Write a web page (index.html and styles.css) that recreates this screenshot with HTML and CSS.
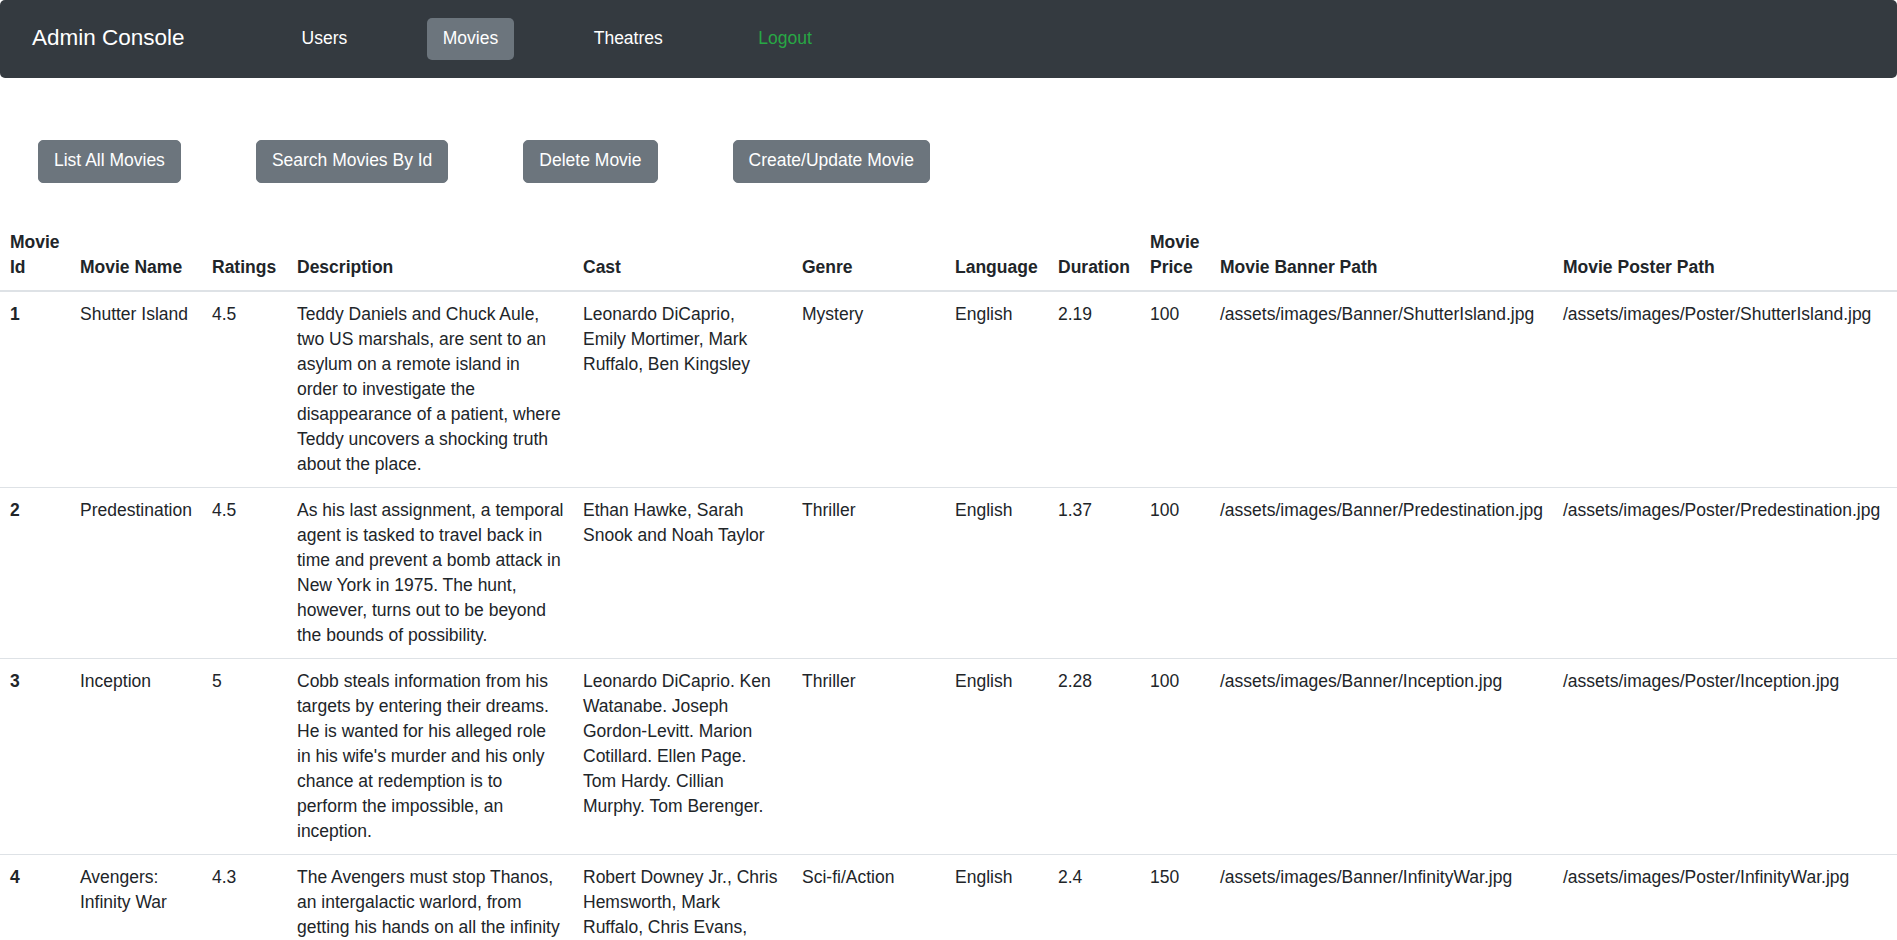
FILE: index.html
```html
<!DOCTYPE html>
<html lang="en">
<head>
<meta charset="utf-8">
<title>Admin Console</title>
<link rel="stylesheet" href="styles.css">
</head>
<body>
<nav class="navbar">
  <span class="brand">Admin Console</span>
  <ul class="nav">
    <li><a class="nav-link">Users</a></li>
    <li><a class="nav-link active">Movies</a></li>
    <li><a class="nav-link">Theatres</a></li>
    <li><a class="nav-link logout">Logout</a></li>
  </ul>
</nav>

<div class="toolbar">
  <button class="btn">List All Movies</button>
  <button class="btn">Search Movies By Id</button>
  <button class="btn">Delete Movie</button>
  <button class="btn">Create/Update Movie</button>
</div>

<table class="movies">
  <colgroup>
    <col class="c-id"><col class="c-name"><col class="c-rating"><col class="c-desc"><col class="c-cast"><col class="c-genre"><col class="c-lang"><col class="c-dur"><col class="c-price"><col class="c-banner"><col class="c-poster">
  </colgroup>
  <thead>
    <tr>
      <th>Movie Id</th><th>Movie Name</th><th>Ratings</th><th>Description</th><th>Cast</th><th>Genre</th><th>Language</th><th>Duration</th><th>Movie Price</th><th>Movie Banner Path</th><th>Movie Poster Path</th>
    </tr>
  </thead>
  <tbody>
    <tr>
      <th>1</th><td>Shutter Island</td><td>4.5</td>
      <td class="desc">Teddy Daniels and Chuck Aule, two US marshals, are sent to an asylum on a remote island in order to investigate the disappearance of a patient, where Teddy uncovers a shocking truth about the place.</td>
      <td>Leonardo DiCaprio, Emily Mortimer, Mark Ruffalo, Ben Kingsley</td>
      <td>Mystery</td><td>English</td><td>2.19</td><td>100</td>
      <td>/assets/images/Banner/ShutterIsland.jpg</td><td>/assets/images/Poster/ShutterIsland.jpg</td>
    </tr>
    <tr>
      <th>2</th><td>Predestination</td><td>4.5</td>
      <td class="desc">As his last assignment, a temporal agent is tasked to travel back in time and prevent a bomb attack in New York in 1975. The hunt, however, turns out to be beyond the bounds of possibility.</td>
      <td>Ethan Hawke, Sarah Snook and Noah Taylor</td>
      <td>Thriller</td><td>English</td><td>1.37</td><td>100</td>
      <td>/assets/images/Banner/Predestination.jpg</td><td>/assets/images/Poster/Predestination.jpg</td>
    </tr>
    <tr>
      <th>3</th><td>Inception</td><td>5</td>
      <td class="desc">Cobb steals information from his targets by entering their dreams. He is wanted for his alleged role in his wife's murder and his only chance at redemption is to perform the impossible, an inception.</td>
      <td>Leonardo DiCaprio. Ken Watanabe. Joseph Gordon-Levitt. Marion Cotillard. Ellen Page. Tom Hardy. Cillian Murphy. Tom Berenger.</td>
      <td>Thriller</td><td>English</td><td>2.28</td><td>100</td>
      <td>/assets/images/Banner/Inception.jpg</td><td>/assets/images/Poster/Inception.jpg</td>
    </tr>
    <tr>
      <th>4</th><td>Avengers: Infinity War</td><td>4.3</td>
      <td class="desc">The Avengers must stop Thanos, an intergalactic warlord, from getting his hands on all the infinity stones.</td>
      <td>Robert Downey Jr., Chris Hemsworth, Mark Ruffalo, Chris Evans, Scarlett Johansson</td>
      <td>Sci-fi/Action</td><td>English</td><td>2.4</td><td>150</td>
      <td>/assets/images/Banner/InfinityWar.jpg</td><td>/assets/images/Poster/InfinityWar.jpg</td>
    </tr>
  </tbody>
</table>
</body>
</html>
```

FILE: styles.css
```css
* { box-sizing: border-box; }

html, body {
  margin: 0;
  padding: 0;
  background: #fff;
}

body {
  font-family: "Liberation Sans", Arial, sans-serif;
  font-size: 17.5px;
  line-height: 25px;
  color: #212529;
}

.navbar {
  display: flex;
  align-items: center;
  height: 78px;
  padding-left: 32px;
  background: #343a40;
  border-radius: 5px;
}

.brand {
  color: #fff;
  font-size: 22.5px;
  line-height: 28px;
  margin-top: -2px;
}

.nav {
  display: flex;
  align-items: center;
  gap: 63.5px;
  list-style: none;
  margin: 0 0 0 101px;
  padding: 0;
}

.nav-link {
  display: block;
  padding: 7.5px 16px 9.5px;
  color: #fff;
  border-radius: 5px;
  line-height: 25px;
}

.nav-link.active {
  background: #6c757d;
}

.nav-link.logout {
  color: #28a745;
}

.toolbar {
  display: flex;
  gap: 75px;
  padding: 62px 0 37px 38px;
}

.btn {
  font-family: inherit;
  font-size: 17.5px;
  line-height: 25px;
  color: #fff;
  background: #6c757d;
  border: 1px solid #6c757d;
  border-radius: 5px;
  padding: 7px 15px 9px;
}

.movies {
  width: 1897px;
  table-layout: fixed;
  border-collapse: collapse;
}

.c-id { width: 70px; }
.c-name { width: 132px; }
.c-rating { width: 85px; }
.c-desc { width: 286px; }
.c-cast { width: 219px; }
.c-genre { width: 153px; }
.c-lang { width: 103px; }
.c-dur { width: 92px; }
.c-price { width: 70px; }
.c-banner { width: 343px; }
.c-poster { width: 344px; }

.movies th,
.movies td {
  padding: 10px;
  text-align: left;
  vertical-align: top;
  border-top: 1px solid #dee2e6;
}

.movies td.desc {
  padding-right: 9px;
}

.movies thead th {
  vertical-align: bottom;
  border-top: 0;
  border-bottom: 2px solid #dee2e6;
  font-weight: bold;
}

.movies tbody th {
  font-weight: bold;
}
```
